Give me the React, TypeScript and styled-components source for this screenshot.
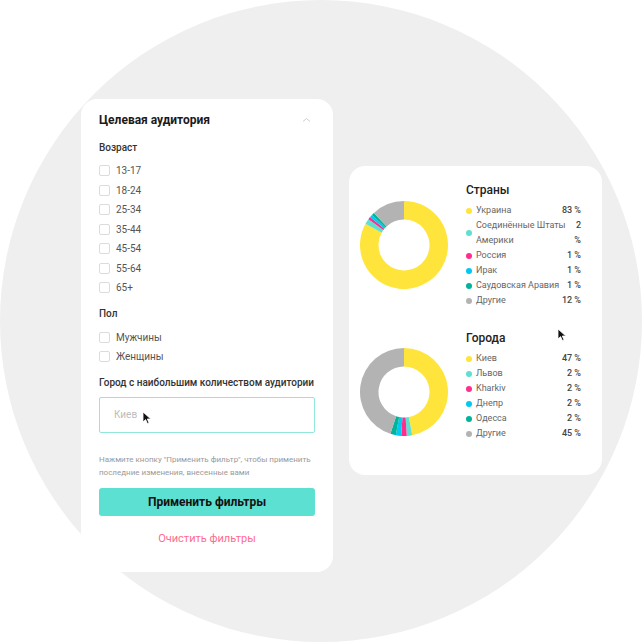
import React from "react";
import styled, { createGlobalStyle } from "styled-components";

const GlobalStyle = createGlobalStyle`
  html, body { margin: 0; padding: 0; background: #ffffff; }
  body { font-family: Roboto, "Liberation Sans", "Noto Sans", sans-serif; -webkit-font-smoothing: antialiased; }
  * { box-sizing: border-box; }
`;

const Stage = styled.div`
  position: relative;
  width: 642px;
  height: 642px;
  border-radius: 50%;
  background: #efefef;
  display: flex;
  align-items: flex-start;
  gap: 16px;
  padding: 99px 0 0 81px;
`;

const FilterCard = styled.div`
  width: 252px;
  height: 473px;
  background: #ffffff;
  border-radius: 16px;
  padding: 14px 18px 0 18px;
  display: flex;
  flex-direction: column;
`;

const TitleRow = styled.div`
  display: flex;
  align-items: center;
  justify-content: space-between;
  height: 14px;
  padding-right: 4px;
`;

const Title = styled.div`
  font-size: 12px;
  font-weight: 700;
  color: #1a1a1a;
  line-height: 14px;
`;

const SectionLabel = styled.div<{ $top: number }>`
  margin-top: ${(p) => p.$top}px;
  font-size: 10px;
  line-height: 14px;
  color: #333;
  font-weight: 500;
  white-space: nowrap;
`;

const CheckList = styled.div<{ $top: number }>`
  margin-top: ${(p) => p.$top}px;
  display: flex;
  flex-direction: column;
`;

const CheckRow = styled.label`
  display: flex;
  align-items: center;
  gap: 6px;
  height: 19.5px;
  font-size: 10px;
  color: #555;
`;

const Box = styled.span`
  width: 11px;
  height: 11px;
  border: 1px solid #dcdcdc;
  border-radius: 2px;
  flex: none;
`;

const InputWrap = styled.div`
  position: relative;
  margin-top: 7px;
`;

const CityInput = styled.input`
  width: 100%;
  height: 36px;
  border: 1px solid #92e6da;
  border-radius: 2px;
  padding: 0 14px;
  font-family: inherit;
  font-size: 10px;
  color: #333;
  outline: none;
  &::placeholder { color: #bdbdbd; }
`;

const Help = styled.div`
  margin-top: 20px;
  font-size: 8px;
  line-height: 13px;
  color: #9a9a9a;
  white-space: nowrap;
`;

const ApplyButton = styled.button`
  margin-top: 9px;
  height: 28px;
  width: 100%;
  border: none;
  border-radius: 3px;
  background: #5ce0d1;
  font-family: inherit;
  font-size: 12px;
  font-weight: 700;
  color: #111;
  cursor: pointer;
`;

const ClearLink = styled.div`
  margin-top: 16px;
  text-align: center;
  font-size: 11px;
  line-height: 14px;
  color: #ff6b8d;
`;

const StatsCard = styled.div`
  margin-top: 67px;
  width: 253px;
  height: 309px;
  background: #ffffff;
  border-radius: 16px;
  padding: 17px 21px 0 11px;
  display: flex;
  flex-direction: column;
  gap: 23px;
`;

const StatBlock = styled.div`
  display: flex;
  align-items: flex-start;
  gap: 18px;
`;

const DonutBox = styled.div<{ $top: number }>`
  margin-top: ${(p) => p.$top}px;
  width: 88px;
  height: 88px;
  flex: none;
`;

const Legend = styled.div`
  flex: 1;
  min-width: 0;
  display: flex;
  flex-direction: column;
`;

const LegendTitle = styled.div`
  font-size: 12px;
  font-weight: 500;
  color: #222;
  line-height: 14px;
  margin-bottom: 6px;
`;

const LegendRow = styled.div`
  display: grid;
  grid-template-columns: 10px minmax(0, 1fr) auto;
  align-items: center;
  font-size: 9px;
  line-height: 15px;
`;

const Dot = styled.span<{ $color: string }>`
  width: 6px;
  height: 6px;
  border-radius: 50%;
  background: ${(p) => p.$color};
`;

const LegendLabel = styled.span`
  color: #666;
  white-space: nowrap;
`;

const LegendValue = styled.span`
  color: #444;
  font-weight: 500;
  text-align: right;
  white-space: nowrap;
`;

const Cursor = styled.svg<{ $x: number; $y: number }>`
  position: absolute;
  left: ${(p) => p.$x}px;
  top: ${(p) => p.$y}px;
  width: 10px;
  height: 14px;
`;

type Slice = {
  label: string;
  value: number;
  color: string;
  labelNode?: React.ReactNode;
  display?: React.ReactNode;
};

const C = {
  yellow: "#ffe53b",
  teal: "#5fe0d0",
  pink: "#ff2e8e",
  blue: "#00c9f2",
  green: "#00b39b",
  gray: "#b3b3b3",
};

const countries: Slice[] = [
  { label: "Украина", value: 83, color: C.yellow },
  {
    label: "Соединённые Штаты Америки",
    labelNode: <>Соединённые Штаты<br />Америки</>,
    value: 2,
    color: C.teal,
    display: <>2<br />%</>,
  },
  { label: "Россия", value: 1, color: C.pink },
  { label: "Ирак", value: 1, color: C.blue },
  { label: "Саудовская Аравия", value: 1, color: C.green },
  { label: "Другие", value: 12, color: C.gray },
];

const cities: Slice[] = [
  { label: "Киев", value: 47, color: C.yellow },
  { label: "Львов", value: 2, color: C.teal },
  { label: "Kharkiv", value: 2, color: C.pink },
  { label: "Днепр", value: 2, color: C.blue },
  { label: "Одесса", value: 2, color: C.green },
  { label: "Другие", value: 45, color: C.gray },
];

function arcPath(cx: number, cy: number, r0: number, r1: number, a0: number, a1: number) {
  const p = (r: number, a: number) => {
    const rad = ((a - 90) * Math.PI) / 180;
    return [cx + r * Math.cos(rad), cy + r * Math.sin(rad)];
  };
  const large = a1 - a0 > 180 ? 1 : 0;
  const [x1, y1] = p(r1, a0);
  const [x2, y2] = p(r1, a1);
  const [x3, y3] = p(r0, a1);
  const [x4, y4] = p(r0, a0);
  return `M${x1} ${y1} A${r1} ${r1} 0 ${large} 1 ${x2} ${y2} L${x3} ${y3} A${r0} ${r0} 0 ${large} 0 ${x4} ${y4} Z`;
}

function Donut({ data }: { data: Slice[] }) {
  const total = data.reduce((s, d) => s + d.value, 0);
  let acc = 0;
  return (
    <svg width="88" height="88" viewBox="0 0 88 88">
      {data.map((d) => {
        const a0 = (acc / total) * 360;
        acc += d.value;
        const a1 = (acc / total) * 360;
        return <path key={d.label} d={arcPath(44, 44, 25.5, 44, a0, a1)} fill={d.color} />;
      })}
    </svg>
  );
}

function StatSection({ title, data, top }: { title: string; data: Slice[]; top: number }) {
  return (
    <StatBlock>
      <DonutBox $top={top}>
        <Donut data={data} />
      </DonutBox>
      <Legend>
        <LegendTitle>{title}</LegendTitle>
        {data.map((d) => (
          <LegendRow key={d.label}>
            <Dot $color={d.color} />
            <LegendLabel>{d.labelNode ?? d.label}</LegendLabel>
            <LegendValue>{d.display ?? `${d.value}\u00a0%`}</LegendValue>
          </LegendRow>
        ))}
      </Legend>
    </StatBlock>
  );
}

function Pointer({ x, y }: { x: number; y: number }) {
  return (
    <Cursor $x={x} $y={y} viewBox="0 0 10 14">
      <path d="M1 1 L1 11 L3.6 8.6 L5.4 12.6 L7 11.9 L5.3 8 L8.8 8 Z" fill="#111" stroke="#fff" strokeWidth="0.8" strokeLinejoin="round" />
    </Cursor>
  );
}

const ages = ["13-17", "18-24", "25-34", "35-44", "45-54", "55-64", "65+"];
const genders = ["Мужчины", "Женщины"];

export default function App() {
  return (
    <>
      <GlobalStyle />
      <Stage>
        <FilterCard>
          <TitleRow>
            <Title>Целевая аудитория</Title>
            <svg width="9" height="6" viewBox="0 0 9 6">
              <polyline points="1,4.5 4.5,1.5 8,4.5" fill="none" stroke="#cfcfcf" strokeWidth="1" />
            </svg>
          </TitleRow>
          <SectionLabel $top={14}>Возраст</SectionLabel>
          <CheckList $top={6}>
            {ages.map((a) => (
              <CheckRow key={a}>
                <Box />
                {a}
              </CheckRow>
            ))}
          </CheckList>
          <SectionLabel $top={9}>Пол</SectionLabel>
          <CheckList $top={7}>
            {genders.map((g) => (
              <CheckRow key={g}>
                <Box />
                {g}
              </CheckRow>
            ))}
          </CheckList>
          <SectionLabel $top={9}>Город с наибольшим количеством аудитории</SectionLabel>
          <InputWrap>
            <CityInput placeholder="Киев" />
          </InputWrap>
          <Help>
            Нажмите кнопку "Применить фильтр", чтобы применить
            <br />
            последние изменения, внесенные вами
          </Help>
          <ApplyButton>Применить фильтры</ApplyButton>
          <ClearLink>Очистить фильтры</ClearLink>
        </FilterCard>
        <StatsCard>
          <StatSection title="Страны" data={countries} top={18} />
          <StatSection title="Города" data={cities} top={17} />
        </StatsCard>
        <Pointer x={142} y={411} />
        <Pointer x={557} y={328} />
      </Stage>
    </>
  );
}
